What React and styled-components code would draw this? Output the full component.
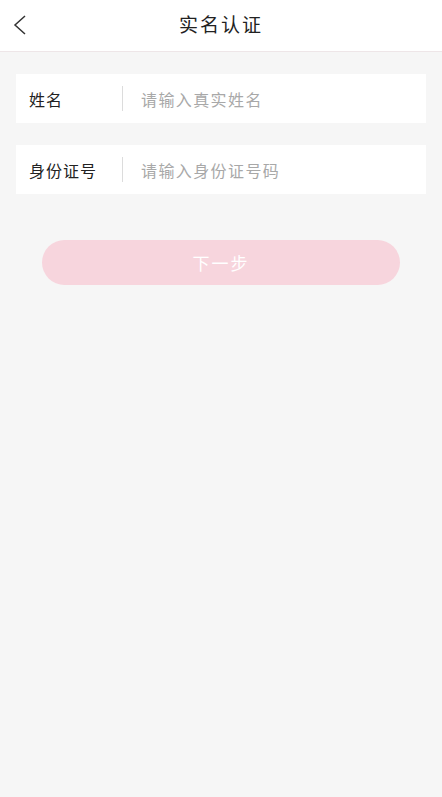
import styled, { createGlobalStyle } from "styled-components";

const GlobalStyle = createGlobalStyle`
  html, body {
    margin: 0;
    padding: 0;
    background: #f6f6f6;
    font-family: "Noto Sans CJK SC", "Noto Sans", sans-serif;
  }
`;

const fields = [
  { label: "姓名", placeholder: "请输入真实姓名" },
  { label: "身份证号", placeholder: "请输入身份证号码" },
];

export default function App() {
  return (
    <Page>
      <GlobalStyle />
      <Header>
        <BackButton aria-label="返回">
          <svg width="14" height="20" viewBox="0 0 14 20" fill="none">
            <path d="M12 1 L2 10 L12 19" stroke="#333" strokeWidth="1.5" />
          </svg>
        </BackButton>
        <Title>实名认证</Title>
      </Header>
      <Form>
        {fields.map((f) => (
          <Row key={f.label}>
            <Label>{f.label}</Label>
            <Divider />
            <Input placeholder={f.placeholder} />
          </Row>
        ))}
        <NextButton disabled>下一步</NextButton>
      </Form>
    </Page>
  );
}

const Page = styled.div`
  min-height: 797px;
  background: #f6f6f6;
`;

const Header = styled.header`
  position: relative;
  height: 51px;
  background: #fff;
  border-bottom: 1px solid #eee6e8;
  display: flex;
  align-items: center;
  justify-content: center;
`;

const BackButton = styled.button`
  position: absolute;
  left: 11px;
  top: 15px;
  border: none;
  background: none;
  padding: 0 0 0 2px;
  display: flex;
`;

const Title = styled.h1`
  margin: 0 0 4px;
  font-size: 19px;
  line-height: 1;
  font-weight: 400;
  color: #222;
  letter-spacing: 2px;
`;

const Form = styled.div`
  padding: 22px 16px 0;
  display: flex;
  flex-direction: column;
  gap: 22px;
`;

const Row = styled.div`
  height: 49px;
  background: #fff;
  display: flex;
  align-items: center;
  padding-left: 13px;
`;

const Label = styled.span`
  width: 93px;
  font-size: 16px;
  line-height: 1;
  letter-spacing: 1px;
  color: #222;
`;

const Divider = styled.span`
  width: 1px;
  height: 25px;
  background: #dcdcdc;
  margin-right: 18px;
`;

const Input = styled.input`
  flex: 1;
  border: none;
  outline: none;
  background: transparent;
  font-family: inherit;
  font-size: 16px;
  letter-spacing: 1.4px;
  color: #222;
  padding: 0;
  &::placeholder {
    color: #a8a8a8;
  }
`;

const NextButton = styled.button`
  margin: 24px 26px 0;
  height: 45px;
  border: none;
  border-radius: 23px;
  background: #f7d5dd;
  color: #fff;
  font-family: inherit;
  font-size: 17px;
  letter-spacing: 2px;
`;
